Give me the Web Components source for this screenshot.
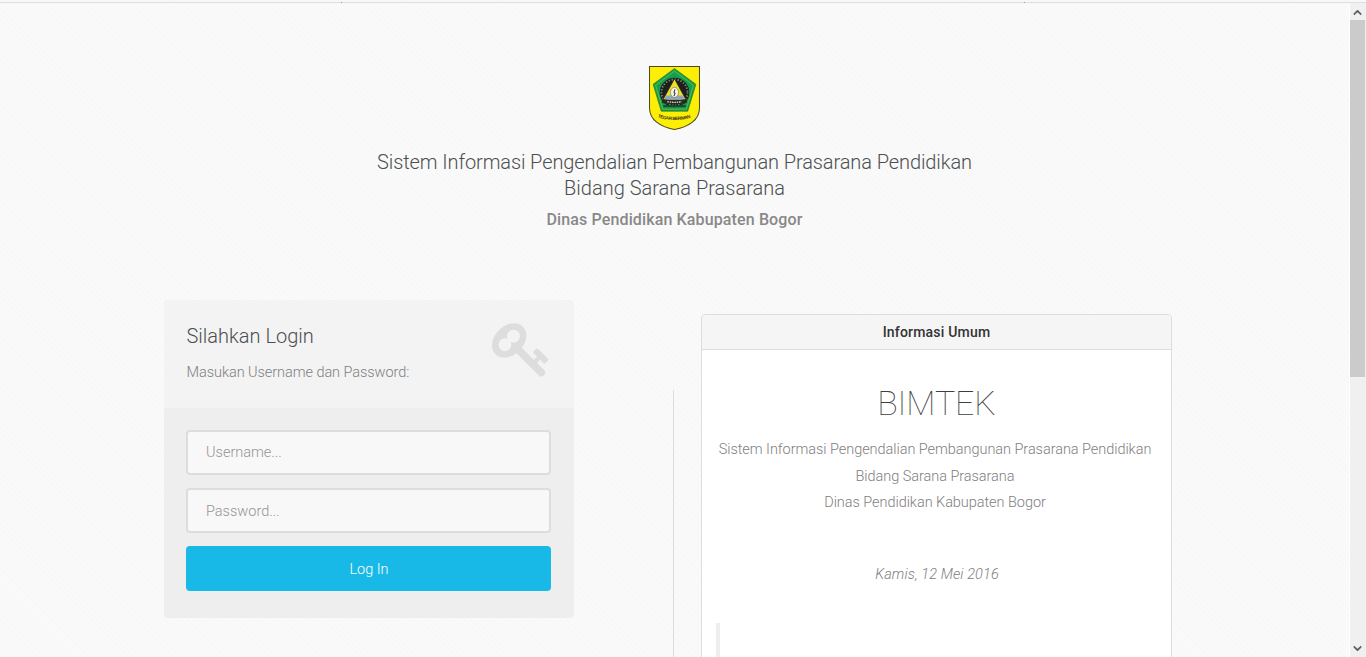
<!DOCTYPE html>
<html lang="id">
<head>
<meta charset="utf-8">
<title>Sistem Informasi</title>
<style>
html,body{margin:0;height:100%;overflow:hidden}
body{font-family:Roboto,sans-serif;font-weight:300;font-size:15px;color:#808080}
</style>
</head>
<body>
<app-shell>
  <page-header></page-header>
  <login-card slot="left">
    <text-field label="Username..."></text-field>
    <text-field label="Password..." type="password" style="--nudge:2px"></text-field>
    <primary-button>Log In</primary-button>
  </login-card>
  <info-panel slot="right" heading="Informasi Umum">
    <event-note></event-note>
  </info-panel>
</app-shell>
<script>
const define = (name, html, setup) => customElements.define(name, class extends HTMLElement {
  constructor() {
    super();
    const t = document.createElement('template');
    t.innerHTML = html;
    this.attachShadow({mode: 'open'}).append(t.content.cloneNode(true));
  }
  connectedCallback() { if (setup) setup(this, this.shadowRoot); }
});

define('app-shell', `<style>
:host{display:grid;grid-template:3px 654px / 1349px 17px;width:1366px;height:657px;overflow:hidden}
.top{grid-column:1/3;box-sizing:border-box;background:#f6f7f9;border-bottom:1px solid #dcdfe3;display:flex;align-items:end}
.top b{width:1px;height:1px;margin:0 0 -1px 341px;background:#999}
.top b+b{margin-left:682px}
main{overflow:hidden;background:repeating-linear-gradient(45deg,#0000 0 2px,#00000002 2px 4px),#fafafa}
.cols{display:grid;grid-template-columns:410px 99px 1px 27px 471px;padding-left:164px;height:700px}
.line{background:#ddd;margin:90px 0 0}
.right{padding-top:14px}
</style>
<div class="top"><b></b><b></b></div>
<main><slot></slot><div class="cols"><div><slot name="left"></slot></div><i></i><div class="line"></div><i></i><div class="right"><slot name="right"></slot></div></div></main>
<scroll-rail></scroll-rail>`);

define('scroll-rail', `<style>
:host{display:flex;flex-direction:column;box-sizing:border-box;width:17px;border-left:1px solid #fff;height:654px;background:#f0f0f0}
svg{display:block;width:15px;height:17px;flex:none}
.thumb{width:15px;height:357px;background:#cbcbcb}
.gap{flex:1}
</style>
<svg viewBox="0 0 15 17"><path d="M4 12V10.500L7.500 7 11 10.500V12L7.500 9z" fill="#555" stroke="#555" stroke-width=".6"/></svg>
<div class="thumb"></div><div class="gap"></div>
<svg viewBox="0 0 15 17"><path d="M4 6V7.500L7.500 11 11 7.500V6L7.500 9z" fill="#555" stroke="#555" stroke-width=".6"/></svg>`);

define('bogor-crest', `<style>:host{display:block;width:51px;height:64px;padding-top:1px}svg{display:block}text{font-family:"Liberation Sans",sans-serif;font-weight:bold}</style>
<svg width="51" height="64" viewBox="1 1 50 63" preserveAspectRatio="none">
<path d="M1.500 1.500H50.500V42C50.500 54 40 61 26 63.500 12 61 1.500 54 1.500 42z" fill="#fdee08" stroke="#4a4a20"/>
<path d="M26 3.500 47 19 39 45.500H13L5 19z" fill="#12a04a" stroke="#376b24" stroke-width=".6"/>
<path d="M26 6 44.500 20 37.500 43.500H14.500L7.500 20z" fill="none" stroke="#7fc356" stroke-width=".7"/>
<circle cx="26" cy="27" r="14.500" fill="#1c201c"/>
<circle cx="26" cy="27" r="12.800" fill="none" stroke="#8f8f80" stroke-width="1.800" stroke-dasharray="1.200 1.800"/>
<path d="M26 13.500 37.500 34.500H14.500z" fill="#eee124" stroke="#222" stroke-width=".8"/>
<path d="M18 30h16l2 4H16z" fill="#8ba7c4"/>
<ellipse cx="26" cy="27" rx="4" ry="5" fill="#f7f5df" stroke="#666" stroke-width=".6"/>
<path d="M26.500 24 25.500 27l1 1-1 2.500" fill="none" stroke="#333" stroke-width="1"/>
<path d="M14 33.500Q26 36 38 33.500V37.500Q26 40 14 37.500z" fill="#252a22"/>
<path d="M19 36Q26 37.500 33 36" fill="none" stroke="#d9d7c0" stroke-width="1.300" stroke-dasharray="1.500 .8"/>
<path d="M15 40.500h22" stroke="#154c2b" stroke-width="2"/>
<path id="m" d="M9.500 51.500Q26 57 43 51.500" fill="none"/>
<text font-size="4.500" fill="#38350f"><textPath href="#m" textLength="33">TEGAR BERIMAN</textPath></text>
</svg>`);

define('page-header', `<style>
:host{display:flex;flex-direction:column;align-items:center;box-sizing:border-box;height:297px;padding-top:62px;text-align:center}
h1{margin:19px 0 0;font-size:20px;line-height:26px;font-weight:300;color:#4b4f51}
h1 span{letter-spacing:-.1px}
p{margin:9px 0 0;font-size:16px;line-height:20px;font-weight:500;letter-spacing:.13px;color:#888}
</style>
<bogor-crest></bogor-crest>
<h1><span>Sistem Informasi Pengendalian Pembangunan Prasarana Pendidikan</span><br>Bidang Sarana Prasarana</h1>
<p>Dinas Pendidikan Kabupaten Bogor</p>`);

define('key-icon', `<style>:host{display:block;width:60px;height:60px;margin-right:1px}</style>
<svg width="60" height="60" viewBox="0 0 1792 1792" fill="#ddd"><path d="M832 512q0-80-56-136t-136-56-136 56-56 136q0 42 19 83-41-19-83-19-80 0-136 56t-56 136 56 136 136 56 136-56 56-136q0-42-19-83 41 19 83 19 80 0 136-56t56-136zm851 704q0 17-49 66t-66 49q-9 0-28.500-16t-36.500-33-38.500-40-24.500-26l-96 96 220 220q28 28 28 68 0 42-39 81t-81 39q-40 0-68-28l-671-671q-176 131-365 131-163 0-265.500-102.500t-102.500-265.500q0-160 95-313t248-248 313-95q163 0 265.500 102.500t102.500 265.500q0 189-131 365l355 355 96-96q-3-3-26-24.500t-40-38.500-33-36.500-16-28.500q0-17 49-66t66-49q13 0 23 10 6 6 46 44.500t82 79.500 86.500 86 73 78 28.500 41z"/></svg>`);

define('login-card', `<style>
:host{display:block;width:410px;height:318px;border-radius:4px;overflow:hidden;background:#eee}
header{display:flex;justify-content:space-between;box-sizing:border-box;height:108px;padding:19px 21px 0 22.500px;background:#f3f3f3}
h2{margin:4px 0 0;font-size:20px;line-height:26px;font-weight:300;color:#4b4f51}
p{margin:13px 0 0;font-size:14.500px;line-height:22px;letter-spacing:-.06px}
.form{display:flex;flex-direction:column;gap:13px;padding:22px 23px 27px 22px}
</style>
<header><div><h2>Silahkan Login</h2><p>Masukan Username dan Password:</p></div><key-icon></key-icon></header>
<div class="form"><slot></slot></div>`);

define('text-field', `<style>
:host{display:block;height:45px}
input{display:block;box-sizing:border-box;width:100%;height:45px;padding:var(--nudge,0) 18px 0;border:2px solid #ddd;border-radius:4px;background:#f8f8f8;font:300 14.500px Roboto,sans-serif;color:#888;outline:0}
input::placeholder{color:#959595;opacity:1}
</style><input>`, (el, root) => {
  const i = root.querySelector('input');
  i.placeholder = el.getAttribute('label');
  i.type = el.getAttribute('type') || 'text';
});

define('primary-button', `<style>
:host{display:block;height:45px}
button{width:100%;height:45px;border:0;border-radius:4px;background:#19b9e7;color:#fff;font:300 14.500px Roboto,sans-serif;padding:2px 0 0 1px}
</style><button><slot></slot></button>`);

define('info-panel', `<style>
:host{display:block;box-sizing:border-box;width:471px;height:500px;border:1px solid #ddd;border-radius:4px;background:#fff;overflow:hidden}
header{height:34px;line-height:34px;background:#f5f5f5;border-bottom:1px solid #ddd;text-align:center;font-size:14px;font-weight:500;letter-spacing:.2px;color:#333}
</style><header></header><slot></slot>`, (el, root) => {
  root.querySelector('header').textContent = el.getAttribute('heading');
});

define('event-note', `<style>
:host{display:block;padding:33px 17px 0 14px;text-align:center;font-size:14.500px;line-height:26.500px}
h3{margin:0 -3px 14px 0;font-size:34px;line-height:40px;font-weight:100;letter-spacing:-.1px;color:#3c3f41}
p{margin:0;white-space:nowrap;letter-spacing:-.05px}
em{display:block;margin:45px -4px 0 0;letter-spacing:.1px}
blockquote{margin:35px 0 0;height:80px;border-left:4px solid #eee}
</style>
<h3>BIMTEK</h3>
<p>Sistem Informasi Pengendalian Pembangunan Prasarana Pendidikan<br>Bidang Sarana Prasarana<br>Dinas Pendidikan Kabupaten Bogor</p>
<em>Kamis, 12 Mei 2016</em>
<blockquote></blockquote>`);
</script>
</body>
</html>
